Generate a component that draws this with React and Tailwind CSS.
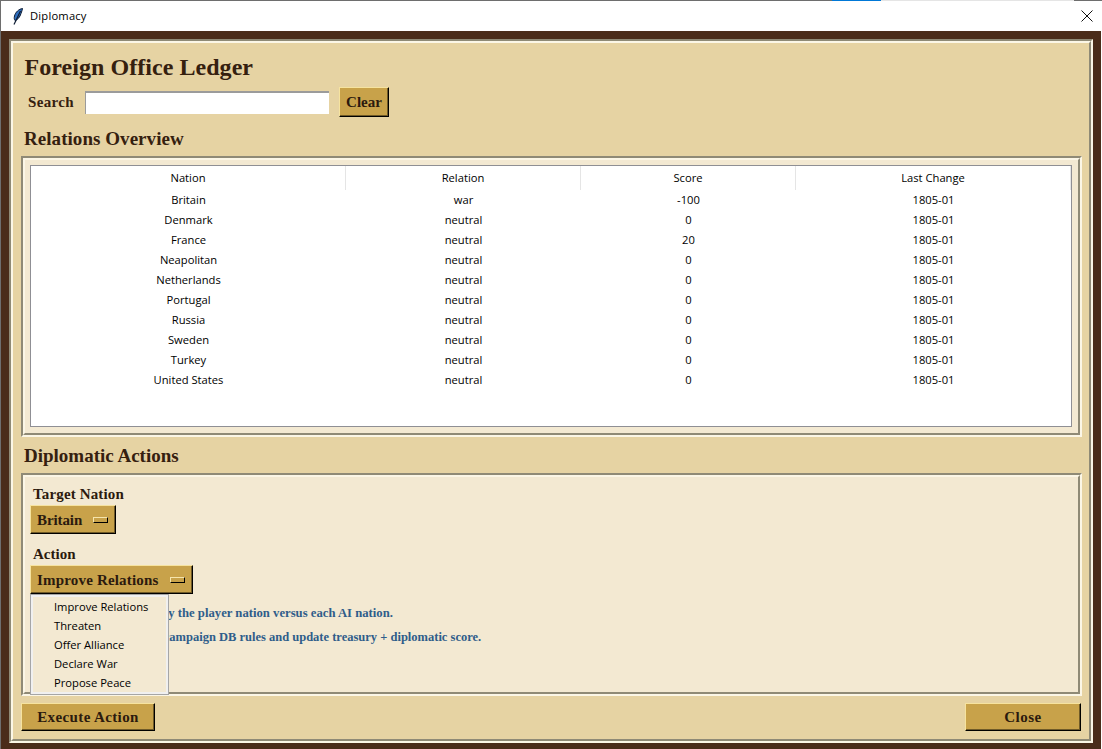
const serif = "font-['Liberation_Serif',serif] font-bold";
const ui = "font-['Open_Sans',sans-serif] text-[11.2px] text-black";

const rows = [
  ["Britain", "war", "-100", "1805-01"],
  ["Denmark", "neutral", "0", "1805-01"],
  ["France", "neutral", "20", "1805-01"],
  ["Neapolitan", "neutral", "0", "1805-01"],
  ["Netherlands", "neutral", "0", "1805-01"],
  ["Portugal", "neutral", "0", "1805-01"],
  ["Russia", "neutral", "0", "1805-01"],
  ["Sweden", "neutral", "0", "1805-01"],
  ["Turkey", "neutral", "0", "1805-01"],
  ["United States", "neutral", "0", "1805-01"],
];
const menu = ["Improve Relations", "Threaten", "Offer Alliance", "Declare War", "Propose Peace"];
const cols = ["w-[315px]", "w-[235px]", "w-[215px]", "w-[275px]"];

function Groove({ className = "", innerClass = "", children }) {
  return (
    <div className={`border-2 border-t-[#8f8a76] border-l-[#8f8a76] border-r-[#fbf6e6] border-b-[#fbf6e6] ${className}`}>
      <div className={`h-full border-2 border-t-[#fbf6e6] border-l-[#fbf6e6] border-r-[#8f8a76] border-b-[#8f8a76] ${innerClass}`}>
        {children}
      </div>
    </div>
  );
}

function Btn({ className = "", children }) {
  return (
    <div className={`${serif} flex items-center text-[15px] text-[#2b1a0e] bg-[#c8a24a] border border-t-[#f6e39f] border-l-[#f6e39f] border-r-black border-b-black shadow-[inset_-1px_-1px_0_#6f5a28] ${className}`}>
      {children}
    </div>
  );
}

function Indicator() {
  return <span className="block w-[15px] h-[6px] bg-[#c8a24a] border border-t-[#f6e5ac] border-l-[#f6e5ac] border-r-black border-b-black" />;
}

function Quill() {
  return (
    <svg width="10" height="17" viewBox="0 0 10 17" className="block">
      <path d="M9.5 0.5 C6 1 2.5 4 1.5 8 C1 10 1.2 11.5 2 12.5 C4.5 12 7 9 8 5.5 C8.7 3.5 9.3 2 9.5 0.5Z" fill="#2f6fc0" stroke="#0d1c33" strokeWidth="1" />
      <path d="M7.5 3 L1 16.5" stroke="#0d1c33" strokeWidth="1.2" />
    </svg>
  );
}

export default function App() {
  return (
    <div className="relative w-[1102px] h-[749px] overflow-hidden bg-white flex flex-col">
      <div className="flex h-px shrink-0">
        <div className="w-[832px] bg-[#6e6e6e]" />
        <div className="w-[49px] bg-[#0078d7]" />
        <div className="w-[193px] bg-[#e5e5e5]" />
        <div className="flex-1 bg-[#6e6e6e]" />
      </div>
      <div className="flex-1 flex min-h-0 border-l border-[#6e6e6e] pr-px">
        <div className="flex-1 flex flex-col min-w-0">
          <div className={`${ui} h-[30px] shrink-0 bg-white flex items-center pl-[12px]`}>
            <Quill />
            <span className="ml-[7px] tracking-[0.2px]">Diplomacy</span>
            <svg width="12" height="12" viewBox="0 0 12 12" className="ml-auto mr-[8px]">
              <path d="M0.5 0.5 L11.5 11.5 M11.5 0.5 L0.5 11.5" stroke="#111" strokeWidth="1" fill="none" />
            </svg>
          </div>
          <div className="flex-1 bg-[#4a2c1a] pt-[8px] pb-[6px] px-[8px] min-h-0">
            <Groove className="h-full" innerClass="bg-[#e6d3a3] pl-[8px] pr-[7px] flex flex-col">
              <h1 className={`${serif} text-[24px] leading-[30px] tracking-[0.05px] text-[#35200f] mt-[9px] ml-[3.5px]`}>Foreign Office Ledger</h1>
              <div className="flex items-center h-[30px] mt-[5px]">
                <span className={`${serif} text-[15px] tracking-[0.35px] text-[#35200f] ml-[7px] w-[57px]`}>Search</span>
                <div className="w-[244px] h-[23px] bg-white border-t-2 border-l border-[#9b9b9b]" />
                <Btn className="ml-[10px] w-[50px] h-[30px] justify-center">Clear</Btn>
              </div>
              <h2 className={`${serif} text-[19px] leading-[24px] tracking-[0.05px] text-[#35200f] mt-[10px] ml-[3px]`}>Relations Overview</h2>
              <Groove className="mt-[5px] h-[281px]" innerClass="bg-[#f3e9d2] pt-[5px] pl-[5px] pr-[6px] pb-[6px]">
                <div className="h-full bg-white border border-[#8f8f94]">
                  <div className="flex h-[24px]">
                    {["Nation", "Relation", "Score", "Last Change"].map((h, i) => (
                      <div key={h} className={`${ui} ${cols[i]} flex items-center justify-center border-r border-[#e5e5e5]`}>{h}</div>
                    ))}
                  </div>
                  {rows.map((r) => (
                    <div key={r[0]} className="flex h-[20px]">
                      {r.map((c, i) => (
                        <div key={i} className={`${ui} ${cols[i]} flex items-center justify-center`}>{c}</div>
                      ))}
                    </div>
                  ))}
                </div>
              </Groove>
              <h2 className={`${serif} text-[19px] leading-[24px] text-[#35200f] mt-[7px] ml-[3px]`}>Diplomatic Actions</h2>
              <Groove className="mt-[5px] h-[223px]" innerClass="bg-[#f3e9d2] pl-[5px] flex flex-col">
                <div className={`${serif} text-[15px] leading-[18px] tracking-[0.15px] text-[#2b1a0e] mt-[8px] ml-[3px]`}>Target Nation</div>
                <Btn className="mt-[2px] w-[86px] h-[29px] pl-[6px] pt-[2px] gap-[11px] tracking-[-0.1px]">Britain<span className="-mt-[2px]"><Indicator /></span></Btn>
                <div className={`${serif} text-[15px] leading-[18px] text-[#2b1a0e] mt-[11px] ml-[3px]`}>Action</div>
                <Btn className="mt-[2px] w-[163px] h-[29px] pl-[6px] pt-[2px] gap-[11px] tracking-[0.18px]">Improve Relations<span className="-mt-[2px]"><Indicator /></span></Btn>
                <div className={`${serif} text-[12.7px] leading-[16px] text-[#2f5d8a] mt-[11px] ml-[12px] whitespace-nowrap`}>Relations are tracked by the player nation versus each AI nation.</div>
                <div className={`${serif} text-[12.5px] leading-[16px] text-[#2f5d8a] mt-[8px] ml-[10.5px] whitespace-nowrap`}>Diplomatic actions use campaign DB rules and update treasury + diplomatic score.</div>
              </Groove>
              <div className="flex justify-between mt-[7px] pr-px">
                <Btn className="w-[134px] h-[28px] justify-center tracking-[0.38px]">Execute Action</Btn>
                <Btn className="w-[116px] h-[28px] justify-center tracking-[0.5px]">Close</Btn>
              </div>
            </Groove>
          </div>
        </div>
      </div>
      <div className="absolute left-[30px] top-[594px] w-[139px] h-[101px] bg-[#f3e9d2] border border-[#a6a6a6] shadow-[inset_0_0_0_2px_#f0f0f0] py-[2px]">
        {menu.map((m) => (
          <div key={m} className={`${ui} h-[19px] leading-[19px] pl-[23px] text-[#1a1a1a]`}>{m}</div>
        ))}
      </div>
    </div>
  );
}
